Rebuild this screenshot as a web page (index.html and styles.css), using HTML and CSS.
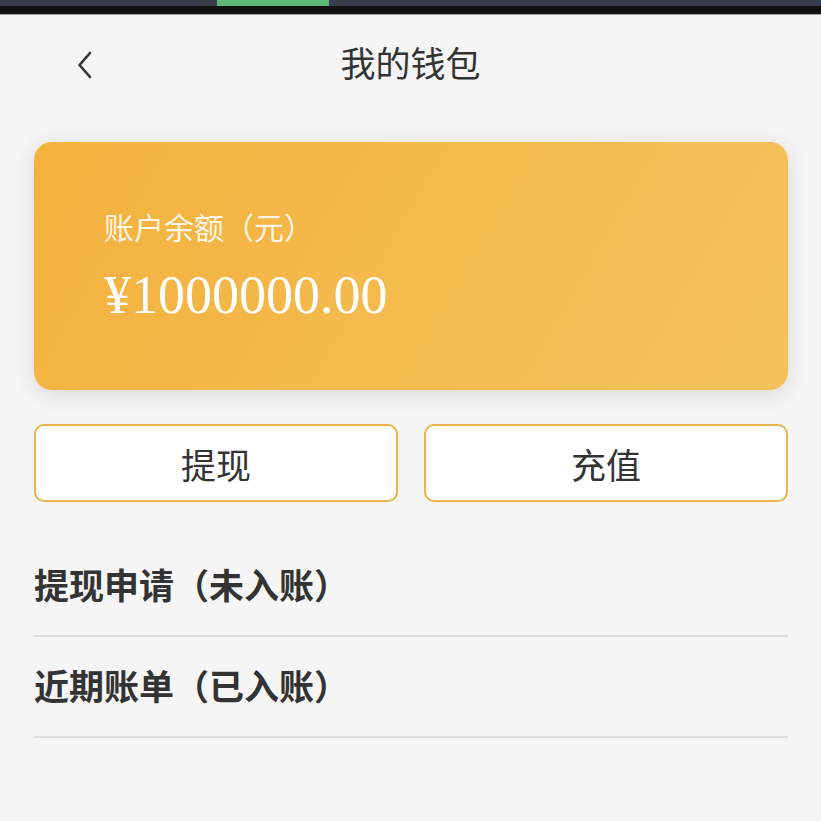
FILE: index.html
```html
<!DOCTYPE html>
<html lang="zh-CN">
<head>
    <meta charset="UTF-8">
    <meta name="viewport" content="width=device-width, initial-scale=1.0">
    <title>我的钱包</title>
    <link rel="stylesheet" href="styles.css">
</head>
<body>
    <div class="status-bar">
        <div class="status-progress"></div>
    </div>
    <div class="status-edge"></div>

    <header class="top-nav">
        <a class="back" href="#">
            <svg width="16" height="28" viewBox="0 0 16 28">
                <path d="M13 2 L2.5 14 L13 26" fill="none" stroke="#333" stroke-width="2.6" stroke-linecap="round" stroke-linejoin="round"/>
            </svg>
        </a>
        <h1>我的钱包</h1>
    </header>

    <main>
        <section class="balance-card">
            <div class="balance-label">账户余额（元）</div>
            <div class="balance-amount">¥1000000.00</div>
        </section>

        <div class="actions">
            <button class="action-btn">提现</button>
            <button class="action-btn">充值</button>
        </div>

        <ul class="record-list">
            <li>提现申请（未入账）</li>
            <li>近期账单（已入账）</li>
        </ul>
    </main>
</body>
</html>
```

FILE: styles.css
```css
* {
    margin: 0;
    padding: 0;
    box-sizing: border-box;
}

body {
    font-family: "Noto Sans CJK SC", "Noto Sans", sans-serif;
    background: #f5f5f5;
    color: #333;
    min-height: 100vh;
}

.status-bar {
    height: 6px;
    background: #393c4a;
}

.status-progress {
    margin-left: 217px;
    width: 112px;
    height: 6px;
    background: #5cb874;
}

.status-edge {
    height: 9px;
    background: #111;
    border-bottom: 1px solid #a0a0a0;
}

.top-nav {
    position: relative;
    height: 96px;
    padding-bottom: 4px;
    display: flex;
    align-items: center;
    justify-content: center;
}

.back {
    position: absolute;
    left: 77px;
    top: 36px;
    display: block;
    line-height: 0;
}

.top-nav h1 {
    font-size: 35px;
    font-weight: normal;
    color: #333;
}

main {
    padding: 31px 33px 0 34px;
}

.balance-card {
    height: 248px;
    border-radius: 18px;
    background: linear-gradient(120deg, #f4b13d 0%, #f3bb4e 55%, #f3c25b 100%);
    box-shadow: 0 4px 22px rgba(0, 0, 0, 0.12);
    padding: 65px 0 0 70px;
    color: #fff;
}

.balance-label {
    font-size: 30px;
    line-height: 38px;
    color: rgba(255, 255, 255, 0.88);
}

.balance-amount {
    margin-top: 20px;
    font-family: "Liberation Serif", "Times New Roman", serif;
    font-size: 54px;
    line-height: 60px;
}

.actions {
    display: flex;
    gap: 26px;
    margin-top: 34px;
}

.action-btn {
    flex: 1;
    height: 78px;
    background: #fff;
    border: 2px solid #eab54c;
    border-radius: 10px;
    font-family: inherit;
    font-size: 35px;
    color: #333;
}

.record-list {
    list-style: none;
    margin-top: 34px;
}

.record-list li {
    height: 101px;
    display: flex;
    align-items: center;
    padding-bottom: 4px;
    border-bottom: 2px solid #dedede;
    font-size: 35px;
    font-weight: bold;
    color: #333;
}
```
